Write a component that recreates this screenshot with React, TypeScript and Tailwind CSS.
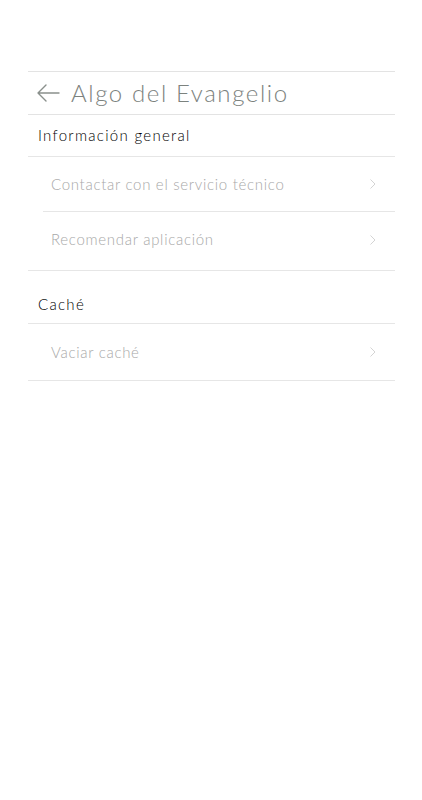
import React from 'react';

const Chevron = () => (
  <svg width="8" height="12" viewBox="0 0 8 12" fill="none" className="shrink-0">
    <path d="M1.5 1.5 L6 6 L1.5 10.5" stroke="#d4d4d4" strokeWidth="1" />
  </svg>
);

const Row = ({ label, h, last }: { label: string; h: string; last?: boolean }) => (
  <div className={`ml-[15px] flex items-center justify-between pr-[18px] ${h} ${last ? '' : 'border-b border-[#e6e6e6]'}`}>
    <span className="pl-[8px] text-[15px] font-light tracking-[0.7px] text-[#a8a8a8]">{label}</span>
    <Chevron />
  </div>
);

const App = () => {
  return (
    <div className="min-h-[800px] bg-white pt-[71px]" style={{ fontFamily: 'Lato, "Open Sans", sans-serif' }}>
      <div className="mx-[28px] w-[367px]">
        {/* header */}
        <div className="flex h-[44px] items-center gap-[10px] border-y border-[#e3e3e3] pl-[7px]">
          <svg width="26" height="20" viewBox="0 0 26 20" fill="none">
            <path d="M24 10 H3 M11 2 L3 10 L11 18" stroke="#8a908c" strokeWidth="1.4" strokeLinecap="round" strokeLinejoin="round" />
          </svg>
          <span className="text-[24px] font-light leading-none tracking-[1.6px] text-[#7c827e]">Algo del Evangelio</span>
        </div>

        {/* Información general */}
        <div className="border-b border-[#e6e6e6]">
          <div className="flex h-[42px] items-center border-b border-[#e6e6e6] pl-[10px] text-[15px] font-light tracking-[1.3px] text-black">
            Información general
          </div>
          <Row label="Contactar con el servicio técnico" h="h-[55px]" />
          <Row label="Recomendar aplicación" h="h-[58px] pb-[3px]" last />
        </div>

        {/* Caché */}
        <div className="border-b border-[#e6e6e6]">
          <div className="flex h-[53px] items-center border-b border-[#e6e6e6] pl-[10px] pt-[14px] text-[15px] font-light tracking-[1.3px] text-black">
            Caché
          </div>
          <Row label="Vaciar caché" h="h-[56px]" last />
        </div>
      </div>
    </div>
  );
};

export default App;
